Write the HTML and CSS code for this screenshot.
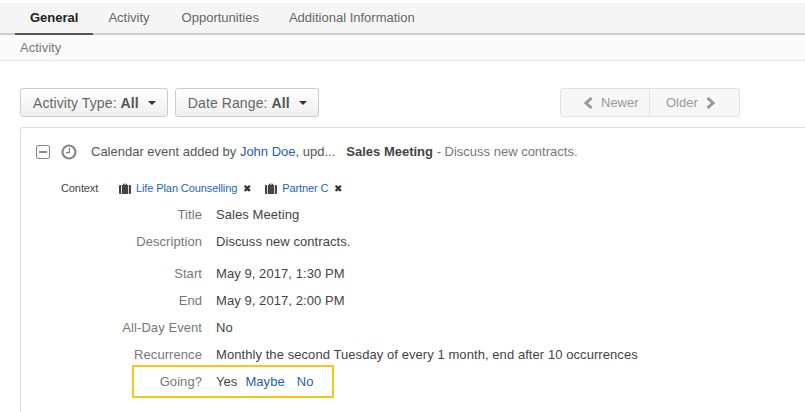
FILE: index.html
```html
<!DOCTYPE html>
<html>
<head>
	<meta charset="utf-8">
	<title>Activity</title>
	<link rel="stylesheet" href="styles.css">
</head>
<body>
<div class="tabs">
	<a class="tab active">General</a>
	<a class="tab tab-wide">Activity</a>
	<a class="tab">Opportunities</a>
	<a class="tab">Additional Information</a>
</div>
<div class="subtitle">Activity</div>
<div class="toolbar">
	<button class="btn">Activity Type: <b>All</b><i class="caret"></i></button>
	<button class="btn">Date Range: <b>All</b><i class="caret"></i></button>
	<div class="pager">
		<span class="page page-newer">
			<svg class="chev" width="11" height="12" viewBox="0 0 11 12"><path d="M8.5 1 3 6l5.500 5" fill="none" stroke="#999" stroke-width="3"/></svg>
			Newer
		</span>
		<span class="page page-older">
			Older
			<svg class="chev" width="11" height="12" viewBox="0 0 11 12"><path d="M2.500 1 8 6l-5.500 5" fill="none" stroke="#999" stroke-width="3"/></svg>
		</span>
	</div>
</div>
<div class="card">
	<div class="head">
		<span class="collapse"><span class="minus"></span></span>
		<svg class="clock" width="16" height="16" viewBox="0 0 16 16"><circle cx="8" cy="8" r="6.500" fill="none" stroke="#888" stroke-width="2.200"/><path d="M8.400 3.800V8.600H5" fill="none" stroke="#888" stroke-width="1.400"/></svg>
		<span class="summary">Calendar event added by <a>John Doe</a>, upd...</span>
		<span class="subject"><b>Sales Meeting</b> <span class="dim">- Discuss new contracts.</span></span>
	</div>
	<div class="context">
		<span class="context-label">Context</span>
		<svg class="case" width="12" height="11" viewBox="0 0 12 11"><path d="M4 2V.8h4V2h3a1 1 0 0 1 1 1v7a1 1 0 0 1-1 1H1a1 1 0 0 1-1-1V3a1 1 0 0 1 1-1zm1 0h2v-.4H5zM2.200 2v9h.8V2zm6.800 0v9h.8V2z" fill="#444" fill-rule="evenodd"/></svg>
		<a class="tag">Life Plan Counselling</a>
		<span class="remove">&#10006;</span>
		<svg class="case" width="12" height="11" viewBox="0 0 12 11"><path d="M4 2V.8h4V2h3a1 1 0 0 1 1 1v7a1 1 0 0 1-1 1H1a1 1 0 0 1-1-1V3a1 1 0 0 1 1-1zm1 0h2v-.4H5zM2.200 2v9h.8V2zm6.800 0v9h.8V2z" fill="#444" fill-rule="evenodd"/></svg>
		<a class="tag">Partner C</a>
		<span class="remove">&#10006;</span>
	</div>
	<div class="row row-first"><span class="label">Title</span><span class="value">Sales Meeting</span></div>
	<div class="row row-gap"><span class="label">Description</span><span class="value">Discuss new contracts.</span></div>
	<div class="row"><span class="label">Start</span><span class="value">May 9, 2017, 1:30 PM</span></div>
	<div class="row"><span class="label">End</span><span class="value">May 9, 2017, 2:00 PM</span></div>
	<div class="row"><span class="label">All-Day Event</span><span class="value">No</span></div>
	<div class="row"><span class="label">Recurrence</span><span class="value">Monthly the second Tuesday of every 1 month, end after 10 occurrences</span></div>
	<div class="going">
		<span class="label">Going?</span>
		<span class="value">Yes</span>
		<a class="answer">Maybe</a>
		<a class="answer">No</a>
	</div>
</div>
</body>
</html>
```

FILE: styles.css
```css
html, body{
	margin: 0;
	height: 412px;
	overflow: hidden;
}
body{
	background: #fff;
	color: #555;
	font-family: "Liberation Sans", Arial, sans-serif;
	font-size: 13px;
}
a{
	color: #2a5db0;
}
.tabs{
	display: flex;
	height: 30px;
	margin-top: 3px;
	padding-left: 15px;
	background: #f5f5f5;
	border-bottom: 2px solid #ccc;
}
.tab{
	height: 30px;
	box-sizing: border-box;
	padding: 7px 15px 0;
	color: #666;
}
.tab-wide{
	padding-right: 17px;
}
.tab.active{
	height: 32px;
	color: #222;
	font-weight: bold;
	border-bottom: 2px solid #555;
}
.subtitle{
	height: 25px;
	padding-left: 20px;
	line-height: 25px;
	background: #fafafa;
	border-bottom: 1px solid #e5e5e5;
	color: #777;
}
.toolbar{
	display: flex;
	gap: 7px;
	align-items: center;
	width: 720px;
	margin: 27px 0 0 20px;
}
.btn{
	display: flex;
	align-items: center;
	height: 29px;
	padding: 0 11px 0 12px;
	background: linear-gradient(#fff, #efefef);
	border: 1px solid #ccc;
	border-radius: 3px;
	color: #666;
	font: 14px "Liberation Sans", Arial, sans-serif;
	letter-spacing: .1px;
	white-space: pre;
}
.btn b{
	color: #555;
}
.caret{
	margin-left: 9px;
	border-top: 4px solid #333;
	border-left: 4px solid transparent;
	border-right: 4px solid transparent;
}
.pager{
	display: flex;
	height: 27px;
	margin-left: auto;
	background: #f7f7f7;
	border: 1px solid #e3e3e3;
	border-radius: 3px;
	color: #999;
}
.page{
	display: flex;
	align-items: center;
	gap: 7px;
	box-sizing: border-box;
}
.page-newer{
	width: 89px;
	padding-left: 22px;
	border-right: 1px solid #e3e3e3;
}
.page-older{
	width: 89px;
	padding-left: 16px;
}
.card{
	box-sizing: border-box;
	width: 785px;
	height: 300px;
	margin: 10px 0 0 20px;
	border: 1px solid #ddd;
	border-right: 0;
	border-radius: 3px 0 0 0;
	letter-spacing: .07px;
}
.head{
	display: flex;
	align-items: center;
	height: 23px;
	margin-top: 12px;
	padding-left: 15px;
	letter-spacing: 0;
}
.collapse{
	display: flex;
	align-items: center;
	justify-content: center;
	box-sizing: border-box;
	width: 14px;
	height: 14px;
	border: 1px solid #888;
	border-radius: 2px;
}
.minus{
	width: 8px;
	height: 2px;
	background: #888;
}
.clock{
	margin-left: 11px;
}
.summary{
	margin-left: 14px;
	white-space: nowrap;
}
.subject{
	margin-left: 11px;
	white-space: nowrap;
}
.subject b{
	color: #444;
}
.dim{
	color: #777;
}
.context{
	display: flex;
	align-items: center;
	height: 18px;
	margin-top: 16px;
	padding-left: 40px;
	font-size: 11px;
	letter-spacing: -.1px;
	color: #444;
}
.context-label{
	width: 58px;
}
.case{
	margin-right: 5px;
}
.tag{
	color: #1f63c0;
}
.remove{
	margin: 0 14px 0 6px;
	color: #333;
	font-size: 10px;
}
.row{
	display: flex;
	height: 27px;
	line-height: 27px;
}
.row-first{
	margin-top: 4px;
}
.row-gap{
	height: 32px;
}
.label{
	width: 181px;
	margin-right: 14px;
	text-align: right;
	color: #777;
}
.value{
	color: #444;
}
.going{
	display: flex;
	box-sizing: border-box;
	width: 202px;
	height: 33px;
	margin: -3px 0 0 111px;
	line-height: 29px;
	border: 2px solid #fcc419;
}
.going .label{
	width: 68px;
}
.answer{
	margin-left: 8px;
}
.answer + .answer{
	margin-left: 12px;
}
```
